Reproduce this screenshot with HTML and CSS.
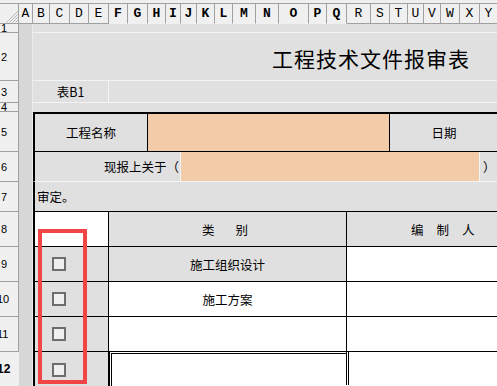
FILE: index.html
```html
<!DOCTYPE html>
<html lang="zh">
<head>
<meta charset="utf-8">
<title>工程技术文件报审表</title>
<link rel="stylesheet" href="styles.css">
</head>
<body>
<div class="topstrip"></div>
<div class="colhdr">
  <div class="corner"><svg width="19" height="19" viewBox="0 0 19 19"><path d="M18.5 6.5 L6.5 18.5 M18.5 9.5 L9.5 18.5 M18.5 12.5 L12.5 18.5 M18.5 15.5 L15.5 18.5" stroke="#b8b8b8" stroke-width="1" fill="none"/></svg></div>
  <div class="ch">A</div><div class="ch">B</div><div class="ch">C</div><div class="ch">D</div><div class="ch">E</div>
  <div class="ch sel">F</div><div class="ch sel">G</div><div class="ch sel">H</div><div class="ch sel">I</div><div class="ch sel">J</div><div class="ch sel">K</div><div class="ch sel">L</div><div class="ch sel">M</div><div class="ch sel">N</div><div class="ch sel">O</div><div class="ch sel">P</div><div class="ch sel">Q</div>
  <div class="ch">R</div><div class="ch">S</div><div class="ch">T</div><div class="ch">U</div><div class="ch">V</div><div class="ch">W</div><div class="ch">X</div><div class="ch">Y</div>
</div>
<div class="main">
  <div class="rows">
    <div class="rh"><span class="num">1</span></div>
    <div class="rh"><span class="num">2</span></div>
    <div class="rh"><span class="num">3</span></div>
    <div class="rh"><span class="num">4</span></div>
    <div class="rh"><span class="num">5</span></div>
    <div class="rh"><span class="num">6</span></div>
    <div class="rh"><span class="num">7</span></div>
    <div class="rh"><span class="num">8</span></div>
    <div class="rh"><span class="num">9</span></div>
    <div class="rh"><span class="num two">10</span></div>
    <div class="rh"><span class="num two">11</span></div>
    <div class="rh rh-sel"><span class="num two">12</span></div>
  </div>
  <div class="colA"></div>
  <div class="sheet">
    <div class="cell s-all gb"></div>
    <div class="cell s-all gb title">工程技术文件报审表</div>
    <div class="cell s4 gb gr center">表B1</div>
    <div class="cell s20 gb"></div>
    <div class="cell s-all"></div>

    <div class="cell s6 tb lb rb bb center">工程名称</div>
    <div class="cell s12 tb rb bb orange"></div>
    <div class="cell s6 tb bb center">日期</div>

    <div class="cell s8 lb gr gb right">现报上关于（</div>
    <div class="cell s15 gr gb orange"></div>
    <div class="cell s1 gb paren">）</div>

    <div class="cell s-all lb bb left">审定。</div>

    <div class="cell s4 lb rb bb white"></div>
    <div class="cell s12 rb bb center"><span class="spread"><span>类</span><span>别</span></span></div>
    <div class="cell s8 bb editor"><span class="spread2"><span>编</span><span>制</span><span>人</span></span></div>

    <div class="cell s4 lb rb bb cbcell"><span class="cb"></span></div>
    <div class="cell s12 rb bb center">施工组织设计</div>
    <div class="cell s8 bb white"></div>

    <div class="cell s4 lb rb bb cbcell"><span class="cb"></span></div>
    <div class="cell s12 rb bb center white">施工方案</div>
    <div class="cell s8 bb white"></div>

    <div class="cell s4 lb rb bb cbcell"><span class="cb"></span></div>
    <div class="cell s12 rb bb white"></div>
    <div class="cell s8 bb white"></div>

    <div class="cell s4 lb rb cbcell"><span class="cb"></span></div>
    <div class="cell s12 rb white"></div>
    <div class="cell s8 white"></div>
  </div>
</div>
<div class="redbox"></div>
<div class="selbox"><div class="handle"></div></div>
</body>
</html>
```
FILE: styles.css
```css
html, body {
  margin: 0;
  padding: 0;
  overflow: hidden;
}
body {
  width: 497px;
  height: 386px;
  background: #f0f0f0;
  position: relative;
  font-family: "Noto Sans CJK SC", "Liberation Sans", sans-serif;
  color: #000;
}
.topstrip {
  height: 3px;
  background: #f0f0f0;
  border-bottom: 1px solid #a0a0a0;
}
.colhdr {
  display: grid;
  grid-template-columns: 19px 14px 17px 20px 19px 20px 19px 20px 18px 15px 16px 18px 18px 23px 23px 30px 18px 20px 24px 19px 18px 16px 17px 19px 20px 18px;
  height: 20px;
  width: 498px;
}
.corner {
  box-sizing: border-box;
  border-right: 1px solid #a0a0a0;
  border-bottom: 1px solid #a0a0a0;
  background: #f0f0f0;
  overflow: hidden;
}
.corner svg { display: block; }
.ch {
  box-sizing: border-box;
  border-right: 1px solid #a0a0a0;
  border-bottom: 1px solid #a0a0a0;
  background: #f0f0f0;
  font-family: "Liberation Mono", monospace;
  font-size: 13px;
  line-height: 20px;
  text-align: center;
  overflow: hidden;
}
.ch.sel {
  font-weight: bold;
  border-bottom-color: #f0f0f0;
}
.main {
  display: flex;
  width: 498px;
}
.rows {
  width: 19px;
  flex: none;
  display: grid;
  grid-template-rows: 9px 48px 22px 9px 40px 30px 30px 35px 35px 35px 35px 35px;
}
.rh {
  box-sizing: border-box;
  border-right: 1px solid #a0a0a0;
  border-bottom: 1px solid #a0a0a0;
  background: #f0f0f0;
  overflow: hidden;
  display: flex;
  align-items: center;
  font-family: "Liberation Sans", sans-serif;
  font-size: 11px;
}
.rh-sel {
  font-weight: bold;
  border-right-color: #f0f0f0;
  font-size: 12px;
}
.num {
  padding-left: 1px;
  white-space: nowrap;
}
.num.two {
  margin-left: -4px;
}
.colA {
  width: 14px;
  flex: none;
  box-sizing: border-box;
  background: #d7d7d7;
  border-right: 1px solid #ececec;
}
.sheet {
  flex: none;
  display: grid;
  grid-template-columns: 17px 20px 19px 20px 19px 20px 18px 15px 16px 18px 18px 23px 23px 30px 18px 20px 24px 19px 18px 16px 17px 19px 20px 18px;
  grid-template-rows: 9px 48px 22px 9px 40px 30px 30px 35px 35px 35px 35px 35px;
  background: #e0e0e0;
}
.cell {
  box-sizing: border-box;
  display: flex;
  align-items: center;
  font-size: 12.5px;
  white-space: nowrap;
  overflow: hidden;
}
.s-all { grid-column: 1 / -1; }
.s1 { grid-column: span 1; }
.s4 { grid-column: span 4; }
.s6 { grid-column: span 6; }
.s8 { grid-column: span 8; }
.s12 { grid-column: span 12; }
.s15 { grid-column: span 15; }
.s20 { grid-column: span 20; }

.tb { border-top: 2px solid #000; }
.lb { border-left: 2px solid #000; }
.rb { border-right: 1px solid #000; }
.bb { border-bottom: 1px solid #000; }
.gr { border-right: 1px solid #f4f4f4; }
.gb { border-bottom: 1px solid #f4f4f4; }

.white { background: #fff; }
.orange { background: #f2cba8; }

.center { justify-content: center; }
.right { justify-content: flex-end; padding-right: 1px; }
.left { padding-left: 2px; }

.title {
  font-size: 21px;
  letter-spacing: 1px;
  padding-left: 239px;
  padding-top: 3px;
}
.paren { padding-left: 3px; }
.spread {
  display: flex;
  gap: 21px;
  padding-right: 5px;
}
.editor { padding-left: 64px; }
.spread2 {
  display: flex;
  gap: 13px;
}
.cbcell { padding-left: 17px; }
.cb {
  box-sizing: border-box;
  width: 14px;
  height: 14px;
  border: 2px solid #6d6d6d;
  background: #efefef;
}
.redbox {
  position: absolute;
  left: 38px;
  top: 229px;
  width: 49px;
  height: 155px;
  box-sizing: border-box;
  border: 4px solid #f24545;
}
.selbox {
  position: absolute;
  left: 109px;
  top: 351px;
  width: 240px;
  height: 38px;
  box-sizing: border-box;
  border: 3px double #000;
}
.handle {
  position: absolute;
  right: -5px;
  bottom: -6px;
  width: 5px;
  height: 5px;
  background: #000;
  border: 1px solid #fff;
}
```
